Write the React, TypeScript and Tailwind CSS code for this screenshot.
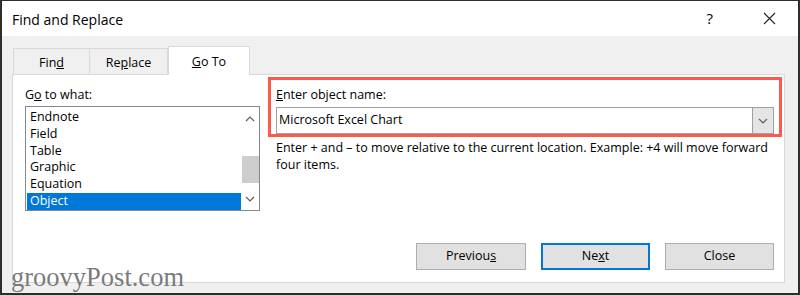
const font = { fontFamily: '"Open Sans", "Noto Sans", sans-serif' };

const Chevron = ({ up = false }: { up?: boolean }) => (
    <svg width="10" height="6" viewBox="0 0 10 6" className="block">
        <polyline
            points={up ? "1,5 5,1 9,5" : "1,1 5,5 9,1"}
            fill="none"
            stroke="#606060"
            strokeWidth="1.2"
        />
    </svg>
);

const items = ["Endnote", "Field", "Table", "Graphic", "Equation", "Object"];

const App = () => {
    return (
        <div
            className="w-[800px] h-[295px] flex flex-col bg-[#f0f0f0] border-2 border-t border-[#2e2e2e] text-black relative overflow-hidden"
            style={font}
        >
            {/* title bar */}
            <div className="h-[35px] shrink-0 bg-white flex items-center pl-[10px] pr-[22px]">
                <span className="text-[14px] flex-1 pt-px">Find and Replace</span>
                <span className="text-[15px] mr-[50px]">?</span>
                <svg width="13" height="13" viewBox="0 0 13 13">
                    <path d="M1 1 L12 12 M12 1 L1 12" stroke="#222" strokeWidth="1.1" />
                </svg>
            </div>

            <div className="flex-1 flex flex-col pt-[10px] pl-[10px] pr-[13px] pb-[10px]">
                {/* tabs */}
                <div className="flex items-end h-[28px] pl-px text-[12.5px] relative z-10">
                    <div className="w-[77px] h-[26px] pt-[3px] flex items-center justify-center border border-b-0 border-[#d9d9d9] bg-[#f0f0f0]">
                        <span>Fin<u>d</u></span>
                    </div>
                    <div className="w-[78px] h-[26px] pt-[3px] flex items-center justify-center border border-l-0 border-b-0 border-[#d9d9d9] bg-[#f0f0f0]">
                        <span>Re<u>p</u>lace</span>
                    </div>
                    <div className="w-[82px] h-[29px] -mb-px pt-[3px] flex items-center justify-center border border-b-0 border-[#d9d9d9] bg-white">
                        <span><u>G</u>o To</span>
                    </div>
                </div>

                {/* panel */}
                <div className="flex-1 flex flex-col bg-white border border-[#d9d9d9] pl-[12px] pr-[10px] pb-[12px] text-[12.5px]">
                    <div className="flex">
                        {/* left column */}
                        <div className="w-[235px] pt-[11px]">
                            <div className="h-[20px]">G<u>o</u> to what:</div>
                            <div className="h-[105px] border border-[#828790] flex">
                                <div className="flex-1 pt-[2px] pl-px">
                                    {items.map((it) => (
                                        <div
                                            key={it}
                                            className={`h-[16.8px] leading-[16.8px] pl-[3px] ${it === "Object" ? "bg-[#0078d7] text-white" : ""}`}
                                        >
                                            {it}
                                        </div>
                                    ))}
                                </div>
                                <div className="w-[18px] flex flex-col items-center">
                                    <div className="h-[18px] flex items-center justify-center mt-[3px]">
                                        <Chevron up />
                                    </div>
                                    <div className="mt-[28px] w-[17px] h-[27px] bg-[#cdcdcd]" />
                                    <div className="flex-1" />
                                    <div className="h-[18px] flex items-center justify-center mb-[2px]">
                                        <Chevron />
                                    </div>
                                </div>
                            </div>
                        </div>

                        {/* right column */}
                        <div className="flex-1 ml-[8px]">
                            <div className="mt-[2px] -mr-[8px] border-[3px] border-[#fb5a4f] pl-[5px] pr-[5px] pt-[6px] pb-[0px]">
                                <div className="h-[21px]"><u>E</u>nter object name:</div>
                                <div className="h-[27px] border border-[#a0a0a0] flex">
                                    <div className="flex-1 flex items-center pl-[2px]">Microsoft Excel Chart</div>
                                    <div className="w-[21px] bg-[#e5e5e5] border-l border-[#a0a0a0] flex items-center justify-center">
                                        <Chevron />
                                    </div>
                                </div>
                            </div>
                            <div className="pl-[8px] pt-[2px] leading-[17px]">
                                Enter + and – to move relative to the current location. Example: +4 will move forward four items.
                            </div>
                        </div>
                    </div>

                    {/* buttons */}
                    <div className="mt-auto flex justify-end gap-[15px]">
                        <button className="w-[110px] h-[27px] bg-[#e1e1e1] border border-[#adadad]">
                            Previou<u>s</u>
                        </button>
                        <button className="w-[109px] h-[27px] bg-[#e1e1e1] border-2 border-[#0078d7]">
                            Ne<u>x</u>t
                        </button>
                        <button className="w-[109px] h-[27px] bg-[#e1e1e1] border border-[#adadad]">
                            Close
                        </button>
                    </div>
                </div>
            </div>

            {/* watermark */}
            <div
                className="absolute left-[9px] bottom-[3px] text-[26.5px] leading-none text-[#7a7a7a]"
                style={{ fontFamily: '"Liberation Serif", "DejaVu Serif", serif' }}
            >
                groovyPost.com
            </div>
        </div>
    );
};

export default App;
